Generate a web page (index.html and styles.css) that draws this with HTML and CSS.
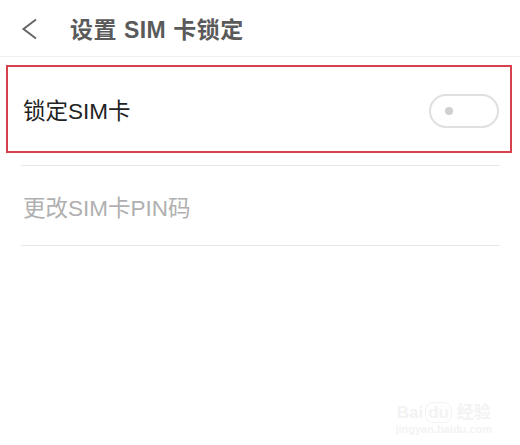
FILE: index.html
```html
<!DOCTYPE html>
<html lang="zh-CN">
<head>
    <meta charset="UTF-8">
    <meta name="viewport" content="width=device-width, initial-scale=1.0">
    <title>设置 SIM 卡锁定</title>
    <link rel="stylesheet" href="styles.css">
</head>
<body>
    <div class="topbar">
        <a class="back" href="#" title="返回">
            <svg width="16" height="22" viewBox="0 0 16 22">
                <path d="M15 1.5 L2.5 11 L15 20.5" fill="none" stroke="#666" stroke-width="2"/>
            </svg>
        </a>
        <h1>设置 SIM 卡锁定</h1>
    </div>

    <div class="list">
        <div class="row row-lock highlight">
            <span class="label">锁定SIM卡</span>
            <span class="switch"><span class="knob"></span></span>
        </div>
        <div class="divider"></div>
        <div class="row row-pin">
            <span class="label disabled">更改SIM卡PIN码</span>
        </div>
        <div class="divider"></div>
    </div>

    <div class="watermark">
        <div class="wm-logo">Bai<span class="wm-du">du</span> 经验</div>
        <div class="wm-url">jingyan.baidu.com</div>
    </div>
</body>
</html>
```

FILE: styles.css
```css
body {
    font-family: "Liberation Sans", "Noto Sans CJK SC", sans-serif;
    margin: 0;
    padding: 0;
    background-color: #fff;
    width: 520px;
    height: 445px;
    position: relative;
    overflow: hidden;
}
.topbar {
    height: 56px;
    display: flex;
    align-items: center;
    border-bottom: 1px solid #f0f0f0;
}
.back {
    display: flex;
    margin-left: 21px;
    width: 16px;
    margin-top: 2px;
}
.topbar h1 {
    margin: 0 0 0 33px;
    font-size: 23px;
    font-weight: bold;
    color: #5a5a5a;
    letter-spacing: 0.5px;
}
.list {
    padding-top: 8px;
}
.row {
    display: flex;
    align-items: center;
    justify-content: space-between;
}
.row-lock {
    height: 84px;
    margin: 0 8px 0 6px;
    padding: 0 11px 0 15px;
    border: 2.5px solid #d7414d;
}
.row-pin {
    height: 79px;
    padding-left: 23px;
}
.label {
    font-size: 22.5px;
    color: #222;
}
.label.disabled {
    color: #b0b0b0;
}
.switch {
    width: 66px;
    height: 30px;
    border: 2px solid #e0e0e0;
    border-radius: 17px;
    display: flex;
    align-items: center;
    margin-top: 3px;
}
.knob {
    width: 8px;
    height: 8px;
    border-radius: 50%;
    background-color: #cfcfcf;
    margin-left: 14px;
}
.divider {
    height: 1px;
    background-color: #e8e8e8;
    margin: 0 20px 0 21px;
}
.row-lock + .divider {
    margin-top: 12px;
}
.watermark {
    position: absolute;
    right: 28px;
    bottom: 10px;
    text-align: center;
    color: #f3f3f3;
}
.wm-logo {
    font-size: 17px;
    font-weight: bold;
}
.wm-du {
    border: 1px solid #f3f3f3;
    border-radius: 8px;
    padding: 0 2px;
    margin-left: 2px;
}
.wm-url {
    font-size: 11px;
    font-weight: bold;
}
```
